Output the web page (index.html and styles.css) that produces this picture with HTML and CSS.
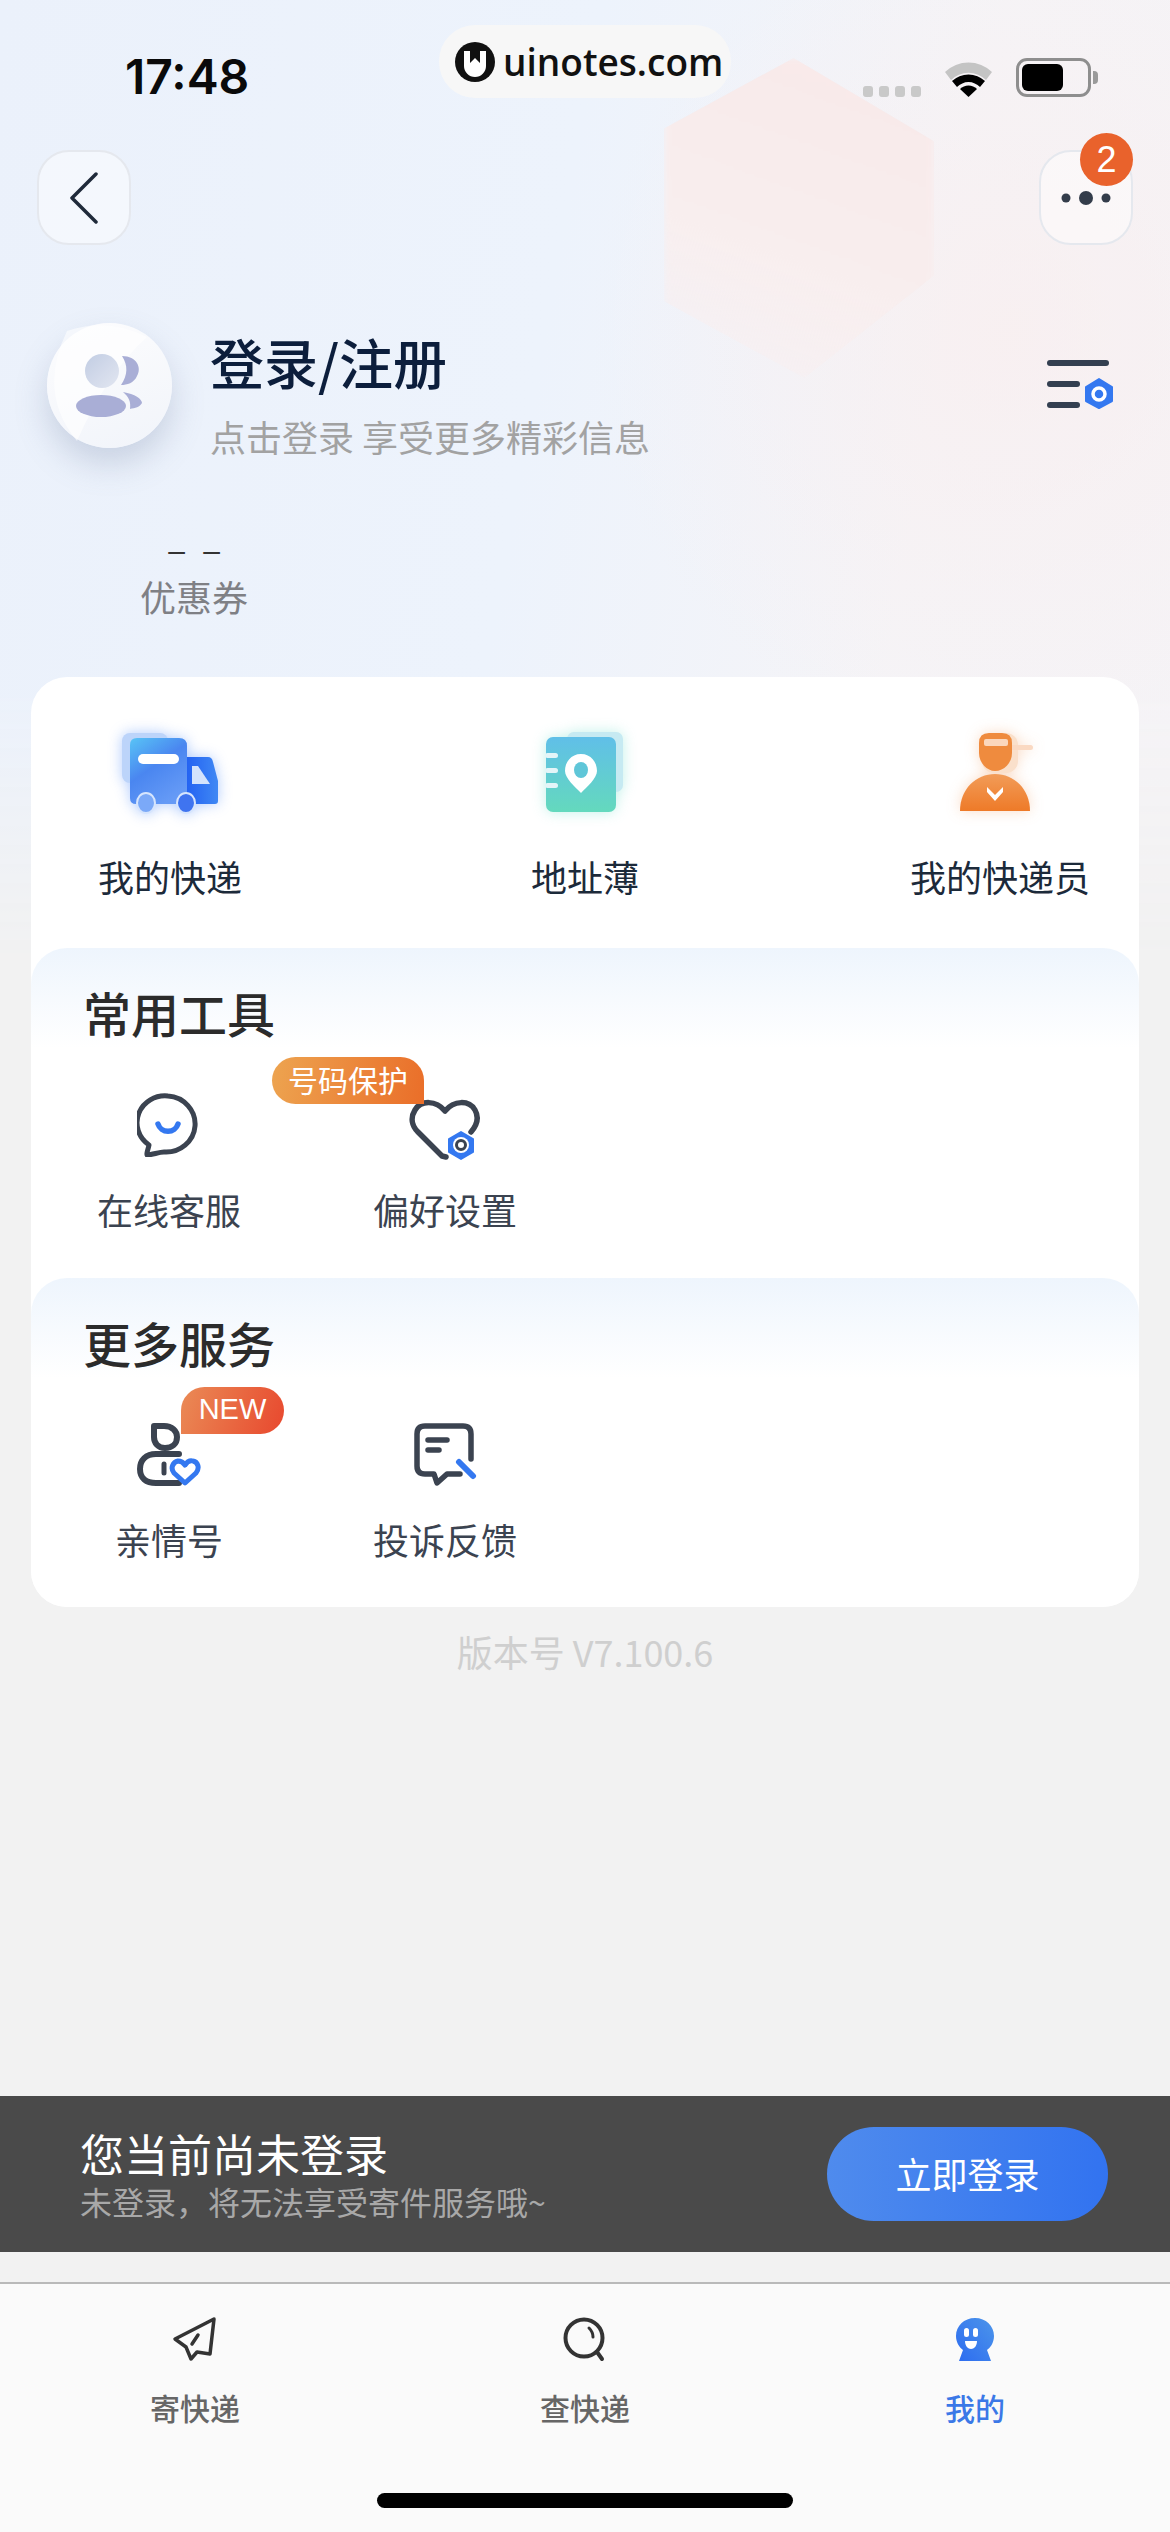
FILE: index.html
```html
<!DOCTYPE html>
<html lang="zh-CN">
<head>
    <meta charset="UTF-8">
    <meta name="viewport" content="width=device-width, initial-scale=1.0">
    <title>我的</title>
    <link rel="stylesheet" href="styles.css">
</head>
<body>
<div class="page">
    <!-- soft backdrop behind the header -->
    <div class="backdrop"><div class="backdrop-hex"></div></div>

    <div class="status-bar">
        <span class="time">17:48</span>
        <div class="status-icons">
            <div class="signal"><i></i><i></i><i></i><i></i></div>
            <svg class="wifi" width="51" height="38" viewBox="0 0 51 38">
                <path d="M2 13 A34 34 0 0 1 49 13 L43 21 A25 25 0 0 0 8 21 Z" fill="#c4c4c4"/>
                <path d="M9 22 A24 24 0 0 1 42 22 L37 28 A16 16 0 0 0 14 28 Z" fill="#000"/>
                <path d="M17 30 A12 12 0 0 1 34 30 L25.500 38 Z" fill="#000"/>
            </svg>
            <div class="battery"><div class="battery-level"></div></div>
        </div>
    </div>

    <div class="site-pill">
        <svg width="40" height="40" viewBox="0 0 40 40">
            <ellipse cx="20" cy="20" rx="20" ry="20" fill="#111"/>
            <path d="M9 9 h6 v12 l5 -5 l5 5 v-12 h6 v15 a11 11 0 0 1 -22 0 Z" fill="#fff"/>
        </svg>
        <span>uinotes.com</span>
    </div>

    <div class="nav-row">
        <div class="round-btn">
            <svg width="30" height="52" viewBox="0 0 30 52">
                <path d="M27 2 L3 26 L27 50" fill="none" stroke="#1f2a3a" stroke-width="3.500" stroke-linecap="round" stroke-linejoin="round"/>
            </svg>
        </div>
        <div class="round-btn">
            <svg width="50" height="16" viewBox="0 0 50 16">
                <circle cx="5" cy="8" r="4.500" fill="#333c4a"/>
                <circle cx="25" cy="8" r="7" fill="#333c4a"/>
                <circle cx="45" cy="8" r="4.500" fill="#333c4a"/>
            </svg>
            <span class="count-badge">2</span>
        </div>
    </div>

    <div class="profile">
        <div class="avatar">
            <svg width="125" height="125" viewBox="0 0 125 125">
                <defs>
                    <linearGradient id="headFill" x1="0" y1="0" x2="1" y2="1">
                        <stop offset="0" stop-color="#c2cde3"/>
                        <stop offset="1" stop-color="#e2e6f1"/>
                    </linearGradient>
                </defs>
                <path d="M20 8 Q60 -6 100 14 Q60 50 30 118 Q-10 70 20 8 Z" fill="#fff" opacity="0.6"/>
                <path d="M75 33 C90 33 95 45 90 53 C87 60 80 62 74 62 C81 52 81 42 75 33 Z" fill="#a9aed6"/>
                <circle cx="55" cy="48" r="17" fill="url(#headFill)"/>
                <ellipse cx="54" cy="83" rx="25" ry="11" fill="#a9aed6"/>
                <path d="M76 69 C88 71 95 76 95 80 C93 84 88 85 83 86 C84 79 82 74 76 69 Z" fill="#a9aed6"/>
            </svg>
        </div>
        <div class="profile-text">
            <div class="profile-name">登录/注册</div>
            <div class="profile-sub">点击登录 享受更多精彩信息</div>
        </div>
        <svg class="profile-settings" width="68" height="50" viewBox="0 0 68 50">
            <rect x="0" y="1" width="62" height="6" rx="3" fill="#333f50"/>
            <rect x="0" y="22" width="33" height="6" rx="3" fill="#333f50"/>
            <rect x="0" y="43" width="33" height="6" rx="3" fill="#333f50"/>
            <path d="M52 20 L65 28 V42 L52 49 L39 42 V28 Z" fill="#3478f0" stroke="#3478f0" stroke-width="2" stroke-linejoin="round"/>
            <circle cx="52" cy="35" r="6" fill="none" stroke="#fff" stroke-width="3.500"/>
        </svg>
    </div>

    <div class="coupon">
        <div class="coupon-value">– –</div>
        <div class="coupon-label">优惠券</div>
    </div>

    <div class="card">
        <div class="main-row">
            <div class="main-item">
                <svg class="glow-blue" width="100" height="84" viewBox="0 0 100 84">
                    <defs>
                        <linearGradient id="cargoFill" x1="0" y1="0" x2="0.6" y2="1">
                            <stop offset="0" stop-color="#58c4f6"/>
                            <stop offset="0.5" stop-color="#4a86f0"/>
                            <stop offset="1" stop-color="#659af6"/>
                        </linearGradient>
                        <linearGradient id="cabFill" x1="0" y1="0" x2="1" y2="0">
                            <stop offset="0" stop-color="#2463f2"/>
                            <stop offset="1" stop-color="#3f88f4"/>
                        </linearGradient>
                    </defs>
                    <rect x="2" y="2" width="46" height="50" rx="8" fill="#bcd4fa"/>
                    <path d="M67 26 H88 Q92 26 93 31 L98 50 V70 Q98 73 95 73 H67 Z" fill="url(#cabFill)"/>
                    <path d="M10 14 Q10 7 17 7 H59 Q67 7 67 15 V73 H16 Q10 73 10 67 Z" fill="url(#cargoFill)"/>
                    <rect x="18" y="23" width="41" height="10" rx="5" fill="#fff"/>
                    <path d="M72 35 H78 L90 53 H72 Z" fill="#d3e3fc"/>
                    <ellipse cx="26" cy="72" rx="9" ry="10" fill="#7ba9f8" stroke="#d6e5fd" stroke-width="2"/>
                    <ellipse cx="66" cy="72" rx="9" ry="10" fill="#3f74f0" stroke="#d6e5fd" stroke-width="2"/>
                </svg>
                <div class="main-label">我的快递</div>
            </div>
            <div class="main-item">
                <svg class="glow-teal" width="84" height="84" viewBox="0 0 84 84">
                    <defs>
                        <linearGradient id="bookFill" x1="0" y1="0" x2="0" y2="1">
                            <stop offset="0" stop-color="#60bfe8"/>
                            <stop offset="1" stop-color="#64d9bd"/>
                        </linearGradient>
                    </defs>
                    <rect x="24" y="1" width="56" height="60" rx="7" fill="#c6eaf2"/>
                    <rect x="3" y="6" width="70" height="75" rx="7" fill="url(#bookFill)"/>
                    <rect x="2" y="22" width="13" height="5" rx="2.500" fill="#e4f5f8"/>
                    <rect x="2" y="37" width="13" height="5" rx="2.500" fill="#e4f5f8"/>
                    <rect x="2" y="52" width="13" height="5" rx="2.500" fill="#e4f5f8"/>
                    <path d="M38 23 C48 23 54 31 54 40 C54 47 44 56 38 62 C32 56 22 47 22 40 C22 31 28 23 38 23 Z" fill="#fff"/>
                    <ellipse cx="38" cy="39" rx="7" ry="8" fill="#5fc6d8"/>
                </svg>
                <div class="main-label">地址薄</div>
            </div>
            <div class="main-item">
                <svg class="glow-orange" width="84" height="84" viewBox="0 0 84 84">
                    <defs>
                        <linearGradient id="vestFill" x1="0" y1="0" x2="0" y2="1">
                            <stop offset="0" stop-color="#f29c58"/>
                            <stop offset="1" stop-color="#ee7a28"/>
                        </linearGradient>
                    </defs>
                    <rect x="24" y="2" width="36" height="40" rx="12" fill="#fae0cb"/>
                    <rect x="52" y="14" width="23" height="5" rx="2.500" fill="#fad9c2"/>
                    <path d="M21 12 Q21 2 31 2 H44 Q54 2 54 12 V22 C54 32 46 40 37 40 C29 40 21 32 21 22 Z" fill="#ef8b3e"/>
                    <rect x="26" y="8" width="24" height="7" rx="2" fill="#fbd7bc"/>
                    <path d="M2 80 C2 58 18 43 37 43 C56 43 72 58 72 80 Z" fill="url(#vestFill)"/>
                    <path d="M29 56 L37 64 L45 56 V61 L37 70 L29 61 Z" fill="#fff"/>
                </svg>
                <div class="main-label">我的快递员</div>
            </div>
        </div>

        <div class="tool-panel">
            <h2 class="panel-title">常用工具</h2>
            <div class="tool-row">
                <div class="tool-item">
                    <svg class="tool-icon" width="64" height="64" viewBox="0 0 64 64">
                        <path d="M31 3 A28 27 0 1 1 27 59 C22 59 15 62 10 62 C9 61 11 57 12 52 A28 27 0 0 1 31 3 Z" fill="none" stroke="#3b4350" stroke-width="5" stroke-linejoin="round"/>
                        <path d="M21 31 A10.500 10.500 0 0 0 41 31" fill="none" stroke="#3478f0" stroke-width="5.500" stroke-linecap="round"/>
                    </svg>
                    <div class="tool-label">在线客服</div>
                </div>
                <div class="tool-item">
                    <span class="tag tag-phone">号码保护</span>
                    <svg class="tool-icon icon-heart" width="72" height="64" viewBox="0 0 72 64">
                        <path d="M62 33 C68 26 70 18 66 11 C60 1 45 1 36 12 C27 1 12 1 6 11 C1 19 3 27 9 33 L33 57 L37 58" fill="none" stroke="#3b4350" stroke-width="5.500" stroke-linecap="round" stroke-linejoin="round"/>
                        <path d="M52 33 L64 40 V53 L52 60 L40 53 V40 Z" fill="#3478f0" stroke="#3478f0" stroke-width="2" stroke-linejoin="round"/>
                        <circle cx="52" cy="46" r="8" fill="#fff"/>
                        <circle cx="52" cy="46" r="4.500" fill="none" stroke="#3b4350" stroke-width="3"/>
                    </svg>
                    <div class="tool-label">偏好设置</div>
                </div>
            </div>
        </div>

        <div class="tool-panel">
            <h2 class="panel-title">更多服务</h2>
            <div class="tool-row">
                <div class="tool-item">
                    <span class="tag tag-new">NEW</span>
                    <svg class="tool-icon" width="64" height="64" viewBox="0 0 64 64">
                        <path d="M17 3 H27 C35 3 40 8 40 14 C40 21 35 25 28 25 C21 25 17 20 17 14 Z" fill="none" stroke="#3b4350" stroke-width="6" stroke-linejoin="round"/>
                        <path d="M42 31 H19 C9 31 3 37 3 46 C3 55 9 60 19 60 H42" fill="none" stroke="#3b4350" stroke-width="6" stroke-linecap="round"/>
                        <path d="M27 41 V50" fill="none" stroke="#3b4350" stroke-width="5" stroke-linecap="round"/>
                        <path d="M48 60 L37 50 C33 45 36 39 41 38 C44 38 46 39 48 42 C50 39 53 37 56 38 C61 39 63 45 59 50 Z" fill="#fff" stroke="#3478f0" stroke-width="5" stroke-linejoin="round"/>
                    </svg>
                    <div class="tool-label">亲情号</div>
                </div>
                <div class="tool-item">
                    <svg class="tool-icon" width="64" height="64" viewBox="0 0 64 64">
                        <path d="M58 36 V11 Q58 3 50 3 H12 Q4 3 4 11 V43 Q4 51 12 51 H21 L24 60 L34 51 H47" fill="none" stroke="#3b4350" stroke-width="5.500" stroke-linecap="round" stroke-linejoin="round"/>
                        <path d="M15 17 H34" stroke="#3b4350" stroke-width="5.500" stroke-linecap="round"/>
                        <path d="M15 27 H26" stroke="#3b4350" stroke-width="5.500" stroke-linecap="round"/>
                        <path d="M46 39 L60 53" stroke="#3478f0" stroke-width="6" stroke-linecap="round"/>
                    </svg>
                    <div class="tool-label">投诉反馈</div>
                </div>
            </div>
        </div>
    </div>

    <div class="version">版本号 V7.100.6</div>

    <div class="login-bar">
        <div class="login-text">
            <div class="login-title">您当前尚未登录</div>
            <div class="login-sub">未登录，将无法享受寄件服务哦~</div>
        </div>
        <div class="login-btn">立即登录</div>
    </div>

    <div class="tab-bar">
        <div class="tabs">
            <div class="tab">
                <svg width="46" height="46" viewBox="0 0 46 46">
                    <path d="M42 3 L3 23 L14 31 L19 43 L25 36 L38 38 Z" fill="none" stroke="#333" stroke-width="3.500" stroke-linejoin="round"/>
                    <path d="M26 19 L20 28" fill="none" stroke="#333" stroke-width="3.500" stroke-linecap="round"/>
                </svg>
                <div class="tab-label">寄快递</div>
            </div>
            <div class="tab">
                <svg width="46" height="46" viewBox="0 0 46 46">
                    <circle cx="22" cy="22" r="18.500" fill="none" stroke="#333" stroke-width="4"/>
                    <path d="M35 36 L40 43" fill="none" stroke="#333" stroke-width="4" stroke-linecap="round"/>
                    <path d="M27 12 Q31 16 31 21" fill="none" stroke="#333" stroke-width="3" stroke-linecap="round"/>
                </svg>
                <div class="tab-label">查快递</div>
            </div>
            <div class="tab tab-active">
                <svg width="46" height="46" viewBox="0 0 46 46">
                    <defs>
                        <linearGradient id="meFill" x1="0" y1="1" x2="1" y2="0">
                            <stop offset="0" stop-color="#2c6bf0"/>
                            <stop offset="1" stop-color="#4c95ea"/>
                        </linearGradient>
                    </defs>
                    <path d="M23 2 C34 2 42 10 42 20 C42 27 38 32 35 34 L39 45 H7 L11 34 C7 31 4 26 4 20 C4 10 12 2 23 2 Z" fill="url(#meFill)"/>
                    <rect x="12" y="12" width="5" height="9" rx="2.500" fill="#fff"/>
                    <rect x="21" y="12" width="5" height="9" rx="2.500" fill="#fff"/>
                    <path d="M13 25 H25 C25 30 22 33 19 33 C16 33 13 30 13 25 Z" fill="#fff"/>
                </svg>
                <div class="tab-label">我的</div>
            </div>
        </div>
        <div class="home-bar"></div>
    </div>
</div>
</body>
</html>
```

FILE: styles.css
```css
* {
    box-sizing: border-box;
}

body {
    margin: 0;
    font-family: "Noto Sans CJK SC", "Liberation Sans", sans-serif;
    background: #f2f2f2;
}

.page {
    position: relative;
    display: flex;
    flex-direction: column;
    width: 1170px;
    height: 2532px;
    overflow: hidden;
}

.page > * {
    position: relative;
}

.page > .backdrop {
    position: absolute;
    top: 0;
    left: 0;
    width: 1170px;
    height: 960px;
    background:
        radial-gradient(ellipse 420px 420px at 1010px 330px, rgba(250, 236, 236, 0.55), rgba(250, 236, 236, 0)),
        linear-gradient(100deg, #ebf1fb 0%, #edf3fc 45%, #f5f4f7 75%, #f5f3f6 100%);
    -webkit-mask-image: linear-gradient(180deg, #000 72%, transparent 100%);
    mask-image: linear-gradient(180deg, #000 72%, transparent 100%);
}

.backdrop-hex {
    position: absolute;
    top: 58px;
    left: 664px;
    width: 270px;
    height: 320px;
    background: linear-gradient(200deg, #f9e9e9 0%, #f8eeee 60%, rgba(247, 240, 243, 0.4) 100%);
    clip-path: polygon(48% 0, 100% 26%, 100% 68%, 52% 100%, 0 76%, 0 22%);
    filter: blur(3px);
}

/* status bar */
.status-bar {
    display: flex;
    justify-content: space-between;
    align-items: flex-start;
    height: 150px;
    padding: 50px 79px 0 125px;
}

.time {
    font-family: "Inter", sans-serif;
    font-size: 48px;
    font-weight: 600;
    line-height: 54px;
    color: #0a0a0a;
}

.status-icons {
    display: flex;
    align-items: flex-end;
    gap: 22px;
    margin-top: 8px;
}

.signal {
    display: flex;
    gap: 6px;
}

.signal i {
    width: 10px;
    height: 11px;
    border-radius: 3px;
    background: #c9c9c9;
}

.wifi {
    display: block;
}

.battery {
    position: relative;
    width: 75px;
    height: 39px;
    padding: 3px;
    border: 3px solid #8e8e8e;
    border-radius: 11px;
}

.battery::after {
    content: "";
    position: absolute;
    top: 10px;
    right: -10px;
    width: 5px;
    height: 13px;
    border-radius: 0 4px 4px 0;
    background: #9a9a9a;
}

.battery-level {
    width: 41px;
    height: 27px;
    border-radius: 6px;
    background: #000;
}

.page > .site-pill {
    position: absolute;
    top: 25px;
    left: 439px;
    display: flex;
    align-items: center;
    gap: 8px;
    width: 292px;
    height: 73px;
    padding-left: 16px;
    border-radius: 36px;
    background: #f7f7f7;
}

.site-pill span {
    font-family: "Open Sans", sans-serif;
    font-size: 37px;
    font-weight: 600;
    line-height: 40px;
    color: #111;
}

/* back and more buttons */
.nav-row {
    display: flex;
    justify-content: space-between;
    padding: 0 37px;
}

.round-btn {
    position: relative;
    display: flex;
    justify-content: center;
    align-items: center;
    width: 94px;
    height: 95px;
    border: 2px solid #e5e8ee;
    border-radius: 32px;
    background: rgba(255, 255, 255, 0.45);
}

.count-badge {
    position: absolute;
    top: -19px;
    right: -2px;
    width: 53px;
    height: 53px;
    border-radius: 50%;
    background: #e9622c;
    color: #fff;
    font-family: "Liberation Sans", sans-serif;
    font-size: 36px;
    line-height: 53px;
    text-align: center;
}

/* profile */
.profile {
    display: flex;
    align-items: flex-start;
    margin-top: 78px;
    padding-left: 47px;
}

.avatar {
    flex: none;
    width: 125px;
    height: 125px;
    border-radius: 50%;
    background: linear-gradient(160deg, #fdfdfe, #f1f4fa);
    box-shadow: 0 16px 32px rgba(120, 135, 170, 0.3);
}

.avatar svg {
    display: block;
}

.profile-text {
    margin-left: 38px;
}

.profile-name {
    margin-top: 10px;
    font-size: 54px;
    font-weight: 500;
    line-height: 58px;
    color: #0c1e3c;
}

.profile-sub {
    margin-top: 25px;
    font-size: 36px;
    line-height: 40px;
    color: #a2a2a2;
}

.profile-settings {
    margin-top: 36px;
    margin-left: 397px;
}

/* coupon */
.coupon {
    width: 144px;
    margin: 80px 0 0 122px;
    text-align: center;
}

.coupon-value {
    font-family: "Liberation Sans", sans-serif;
    font-size: 30px;
    line-height: 30px;
    word-spacing: 10px;
    color: #333;
}

.coupon-label {
    margin-top: 12px;
    font-size: 36px;
    line-height: 36px;
    color: #7f8085;
}

/* main card */
.card {
    flex: none;
    width: 1108px;
    height: 930px;
    margin: 63px 0 0 31px;
    border-radius: 36px;
    background: #fff;
}

.main-row {
    display: grid;
    grid-template-columns: repeat(3, 200px);
    justify-content: center;
    gap: 215px;
    height: 271px;
    padding-top: 54px;
}

.main-item {
    display: flex;
    flex-direction: column;
    align-items: center;
}

.main-label {
    margin-top: 41px;
    font-size: 36px;
    line-height: 40px;
    color: #1c2a3a;
    white-space: nowrap;
}

.glow-blue {
    filter: drop-shadow(0 0 7px rgba(80, 140, 250, 0.45));
}

.glow-teal {
    filter: drop-shadow(0 0 7px rgba(100, 220, 200, 0.4));
}

.glow-orange {
    filter: drop-shadow(0 0 7px rgba(240, 140, 70, 0.3));
}

.tool-panel {
    height: 330px;
    padding: 40px 52px 0;
    border-radius: 36px;
    background: linear-gradient(180deg, #eef5fd 0, #ffffff 100px);
}

.tool-panel:last-child {
    height: 329px;
}

.panel-title {
    margin: 0;
    font-size: 48px;
    font-weight: 500;
    line-height: 48px;
    color: #2b2b2b;
}

.tool-row {
    display: flex;
    gap: 104px;
    margin-top: 57px;
}

.tool-item {
    position: relative;
    display: flex;
    flex-direction: column;
    align-items: center;
    width: 172px;
}

.tool-icon {
    display: block;
}

.icon-heart {
    margin-top: 6px;
    margin-bottom: -6px;
}

.tool-label {
    margin-top: 34px;
    font-size: 36px;
    line-height: 36px;
    color: #3b4350;
    white-space: nowrap;
}

.tag {
    position: absolute;
    top: -36px;
    height: 47px;
    color: #fff;
    font-size: 30px;
    line-height: 45px;
    text-align: center;
    z-index: 1;
}

.tag-phone {
    left: -87px;
    width: 152px;
    border-radius: 24px 24px 0 24px;
    background: linear-gradient(100deg, #eda450, #ea6e29);
}

.tag-new {
    top: -36px;
    left: 98px;
    width: 103px;
    border-radius: 24px 24px 24px 0;
    background: linear-gradient(110deg, #ea8b56, #e8482e);
    font-family: "Liberation Sans", sans-serif;
    font-size: 29px;
}

.version {
    margin-top: 26px;
    font-size: 36px;
    line-height: 37px;
    color: #cfcfcf;
    text-align: center;
}

/* not logged in bar */
.login-bar {
    flex: none;
    display: flex;
    justify-content: space-between;
    align-items: center;
    height: 156px;
    margin-top: auto;
    padding: 0 62px 0 80px;
    background: #4a4a4a;
}

.login-title {
    font-size: 44px;
    line-height: 44px;
    color: #fff;
}

.login-sub {
    margin-top: 10px;
    font-size: 32px;
    line-height: 32px;
    color: #a8a8a8;
}

.login-btn {
    width: 281px;
    height: 94px;
    border-radius: 47px;
    background: linear-gradient(90deg, #4f8bed, #3273f0);
    color: #fff;
    font-size: 36px;
    line-height: 92px;
    text-align: center;
}

/* tab bar */
.tab-bar {
    flex: none;
    display: flex;
    flex-direction: column;
    align-items: center;
    height: 250px;
    margin-top: 30px;
    border-top: 2px solid #b9b9b9;
    background: #fafafa;
}

.tabs {
    display: grid;
    grid-template-columns: repeat(3, 390px);
    padding-top: 32px;
}

.tab {
    display: flex;
    flex-direction: column;
    align-items: center;
}

.tab svg {
    display: block;
}

.tab-label {
    margin-top: 30px;
    font-size: 30px;
    font-weight: 500;
    line-height: 30px;
    color: #666;
}

.tab-active .tab-label {
    color: #3b78e7;
}

.home-bar {
    width: 416px;
    height: 15px;
    margin-top: auto;
    margin-bottom: 24px;
    border-radius: 8px;
    background: #000;
}
```
